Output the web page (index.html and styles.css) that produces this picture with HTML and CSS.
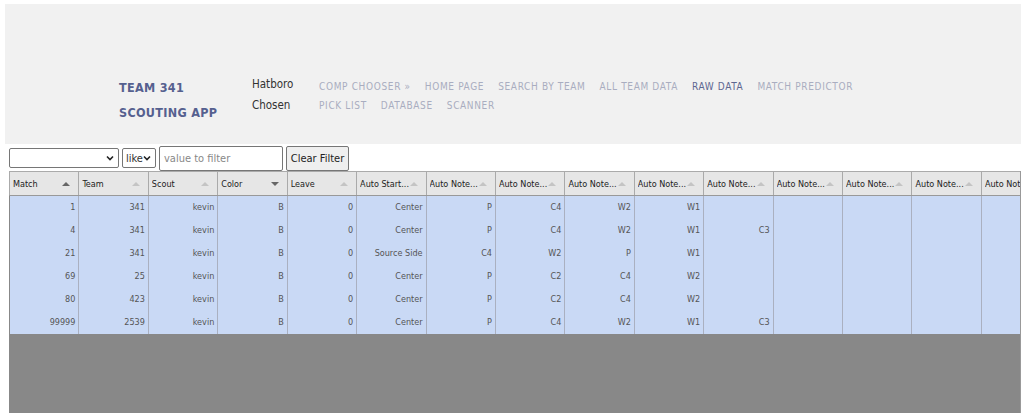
FILE: index.html
```html
<!DOCTYPE html>
<html>
<head>
<meta charset="utf-8">
<link rel="stylesheet" href="styles.css">
</head>
<body>
<header class="topbar">
  <div class="brand">
    <div class="brand-line">TEAM 341</div>
    <div class="brand-line">SCOUTING APP</div>
  </div>
  <div class="comp">
    <div>Hatboro</div>
    <div>Chosen</div>
  </div>
  <nav class="nav">
    <div class="nav-row">
      <a>COMP CHOOSER »</a><a>HOME PAGE</a><a>SEARCH BY TEAM</a><a>ALL TEAM DATA</a><a class="active">RAW DATA</a><a>MATCH PREDICTOR</a>
    </div>
    <div class="nav-row">
      <a>PICK LIST</a><a>DATABASE</a><a>SCANNER</a>
    </div>
  </nav>
</header>
<main class="content">
  <div class="filters">
    <select class="field-select"><option></option></select>
    <select class="type-select"><option>like</option></select>
    <input class="value-input" type="text" placeholder="value to filter">
    <button class="clear-btn">Clear Filter</button>
  </div>
  <div class="grid-wrap">
    <table class="grid">
      <thead>
        <tr>
          <th><span>Match</span><i class="arrow up dark"></i></th>
          <th><span>Team</span><i class="arrow up"></i></th>
          <th><span>Scout</span><i class="arrow up"></i></th>
          <th><span>Color</span><i class="arrow down dark"></i></th>
          <th><span>Leave</span><i class="arrow up"></i></th>
          <th><span>Auto Start...</span><i class="arrow up"></i></th>
          <th><span>Auto Note...</span><i class="arrow up"></i></th>
          <th><span>Auto Note...</span><i class="arrow up"></i></th>
          <th><span>Auto Note...</span><i class="arrow up"></i></th>
          <th><span>Auto Note...</span><i class="arrow up"></i></th>
          <th><span>Auto Note...</span><i class="arrow up"></i></th>
          <th><span>Auto Note...</span><i class="arrow up"></i></th>
          <th><span>Auto Note...</span><i class="arrow up"></i></th>
          <th><span>Auto Note...</span><i class="arrow up"></i></th>
          <th><span>Auto Note</span><i class="arrow up"></i></th>
        </tr>
      </thead>
      <tbody>
        <tr><td>1</td><td>341</td><td>kevin</td><td>B</td><td>0</td><td>Center</td><td>P</td><td>C4</td><td>W2</td><td>W1</td><td></td><td></td><td></td><td></td><td></td></tr>
        <tr><td>4</td><td>341</td><td>kevin</td><td>B</td><td>0</td><td>Center</td><td>P</td><td>C4</td><td>W2</td><td>W1</td><td>C3</td><td></td><td></td><td></td><td></td></tr>
        <tr><td>21</td><td>341</td><td>kevin</td><td>B</td><td>0</td><td>Source Side</td><td>C4</td><td>W2</td><td>P</td><td>W1</td><td></td><td></td><td></td><td></td><td></td></tr>
        <tr><td>69</td><td>25</td><td>kevin</td><td>B</td><td>0</td><td>Center</td><td>P</td><td>C2</td><td>C4</td><td>W2</td><td></td><td></td><td></td><td></td><td></td></tr>
        <tr><td>80</td><td>423</td><td>kevin</td><td>B</td><td>0</td><td>Center</td><td>P</td><td>C2</td><td>C4</td><td>W2</td><td></td><td></td><td></td><td></td><td></td></tr>
        <tr><td>99999</td><td>2539</td><td>kevin</td><td>B</td><td>0</td><td>Center</td><td>P</td><td>C4</td><td>W2</td><td>W1</td><td>C3</td><td></td><td></td><td></td><td></td></tr>
      </tbody>
    </table>
  </div>
</main>
</body>
</html>
```

FILE: styles.css
```css
html, body {
  margin: 0;
  padding: 0;
  background: #ffffff;
  overflow: hidden;
}
body {
  font-family: "DejaVu Sans Condensed", "Liberation Sans", sans-serif;
  color: #333;
  height: 413px;
}
.topbar {
  margin: 4px 3px 0 5px;
  height: 140px;
  box-sizing: border-box;
  background: #f1f1f1;
  display: flex;
  align-items: flex-start;
  padding: 72px 0 0 114px;
}
.brand {
  width: 133px;
  color: #55608f;
  font-size: 12.5px;
  font-weight: bold;
  letter-spacing: 0.3px;
  line-height: 25px;
  margin-top: -1px;
}
.comp {
  width: 67px;
  font-size: 11.5px;
  line-height: 21px;
  color: #333;
  margin-top: -2px;
}
.nav {
  font-size: 10px;
  letter-spacing: 0.65px;
  line-height: 19px;
  color: #a9adc0;
  margin-top: 1px;
}
.nav-row {
  display: flex;
  gap: 14px;
}
.nav a.active {
  color: #5d6690;
}
.content {
  padding: 0 3px 0 9px;
}
.filters {
  display: flex;
  align-items: center;
  gap: 3px;
  height: 26px;
  margin-top: 1px;
}
.filters select, .filters input, .filters button {
  font-family: inherit;
  font-size: 11px;
  box-sizing: border-box;
  margin: 0;
}
.filters select {
  appearance: none;
  -webkit-appearance: none;
  height: 20px;
  background-color: #fff;
  background-image: url("data:image/svg+xml;utf8,<svg xmlns='http://www.w3.org/2000/svg' width='8' height='6' viewBox='0 0 8 6'><path d='M1 1.5 L4 4.5 L7 1.5' fill='none' stroke='%23222' stroke-width='1.6'/></svg>");
  background-repeat: no-repeat;
  background-position: right 4px center;
  background-size: 8px 6px;
  border: 1px solid #767676;
  border-radius: 2px;
  color: #333;
}
.field-select {
  width: 110px;
  padding: 0 14px 0 3px;
}
.type-select {
  width: 34px;
  padding: 0 12px 0 3px;
}
.value-input {
  width: 124px;
  height: 25px;
  border: 1px solid #767676;
  border-radius: 2px;
  padding: 0 4px;
}
.value-input::placeholder {
  color: #888;
}
.clear-btn {
  width: 63px;
  height: 25px;
  background: #efefef;
  border: 1px solid #767676;
  border-radius: 2px;
  color: #222;
  padding: 0;
}
.grid-wrap {
  height: 242px;
  background: #888888;
  overflow: hidden;
  border-right: 1px solid #999;
}
.grid {
  border-collapse: collapse;
  table-layout: fixed;
  width: 1041.5px;
  font-size: 9px;
}
.grid th {
  width: 69.43px;
  height: 24px;
  box-sizing: border-box;
  background: #e6e6e6;
  border-right: 1px solid #aaa;
  border-top: 1px solid #aaa;
  border-bottom: 1px solid #999;
  text-align: left;
  font-weight: normal;
  color: #222;
  padding: 0 16px 0 3px;
  position: relative;
  white-space: nowrap;
  overflow: hidden;
}
.grid th span {
  display: block;
  overflow: hidden;
  text-overflow: clip;
}
.grid th:first-child {
  border-left: 1px solid #aaa;
}
.arrow {
  position: absolute;
  right: 8px;
  top: 10px;
  width: 0;
  height: 0;
  border-left: 4px solid transparent;
  border-right: 4px solid transparent;
}
.arrow.up {
  border-bottom: 4px solid #c4c4c4;
}
.arrow.down {
  border-top: 4px solid #c4c4c4;
}
.arrow.up.dark {
  border-bottom-color: #666;
}
.arrow.down.dark {
  border-top-color: #666;
}
.grid td {
  height: 23px;
  box-sizing: border-box;
  background: #c9d9f5;
  border-right: 1px solid #aab0c0;
  text-align: right;
  color: #555;
  padding: 0 3px;
  white-space: nowrap;
  overflow: hidden;
}
```
